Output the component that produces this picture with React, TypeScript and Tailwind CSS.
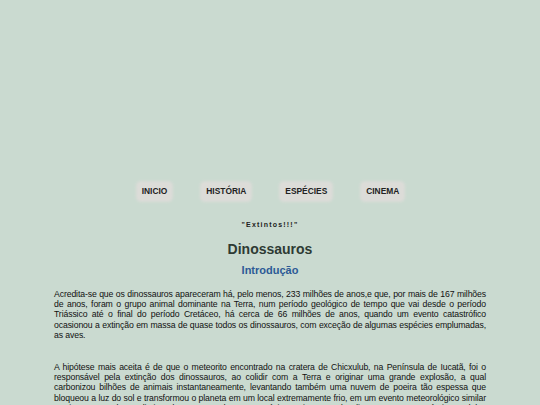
import React from "react";

const nav = ["INICIO", "HISTÓRIA", "ESPÉCIES", "CINEMA"];

export default function App() {
  return (
    <div className="min-h-[405px] w-full bg-[#cadad0] font-['Liberation_Sans',Arial,sans-serif] text-black">
      <div className="h-[183px]" />
      <nav className="flex justify-center gap-[31px] pl-[1px]">
        {nav.map((n) => (
          <a
            key={n}
            className="rounded-[3px] bg-[#dcdcd8] px-[4px] py-[4px] text-[8.4px] font-bold leading-[9px] text-[#222] shadow-[0_0_3px_2px_#dcdcd8]"
          >
            {n}
          </a>
        ))}
      </nav>
      <div className="mt-[20px] text-center text-[7px] font-bold tracking-[1.2px] text-[#222]">"Extintos!!!"</div>
      <h1 className="mt-[10px] text-center text-[14px] font-bold leading-[16px] text-[#2e3a34]">Dinossauros</h1>
      <h2 className="mt-[7px] text-center text-[11px] font-bold leading-[12px] text-[#2d5a96]">Introdução</h2>
      <div className="mx-[54px] mt-[13px] text-justify text-[8.7px] leading-[10.4px] tracking-[-0.12px] text-[#111]">
        <p>
          Acredita-se que os dinossauros apareceram há, pelo menos, 233 milhões de anos,e que, por mais de 167 milhões de anos, foram o grupo animal dominante na Terra, num período geológico de tempo que vai desde o período Triássico até o final do período Cretáceo, há cerca de 66 milhões de anos, quando um evento catastrófico ocasionou a extinção em massa de quase todos os dinossauros, com exceção de algumas espécies emplumadas, as aves.
        </p>
        <p className="mt-[21px]">
          A hipótese mais aceita é de que o meteorito encontrado na cratera de Chicxulub, na Península de Iucatã, foi o responsável pela extinção dos dinossauros, ao colidir com a Terra e originar uma grande explosão, a qual carbonizou bilhões de animais instantaneamente, levantando também uma nuvem de poeira tão espessa que bloqueou a luz do sol e transformou o planeta em um local extremamente frio, em um evento meteorológico similar ao inverno nuclear, eliminando quase todas as espécies existentes de dinossauros. Pouquíssimos deles sobreviveram.
        </p>
      </div>
    </div>
  );
}
